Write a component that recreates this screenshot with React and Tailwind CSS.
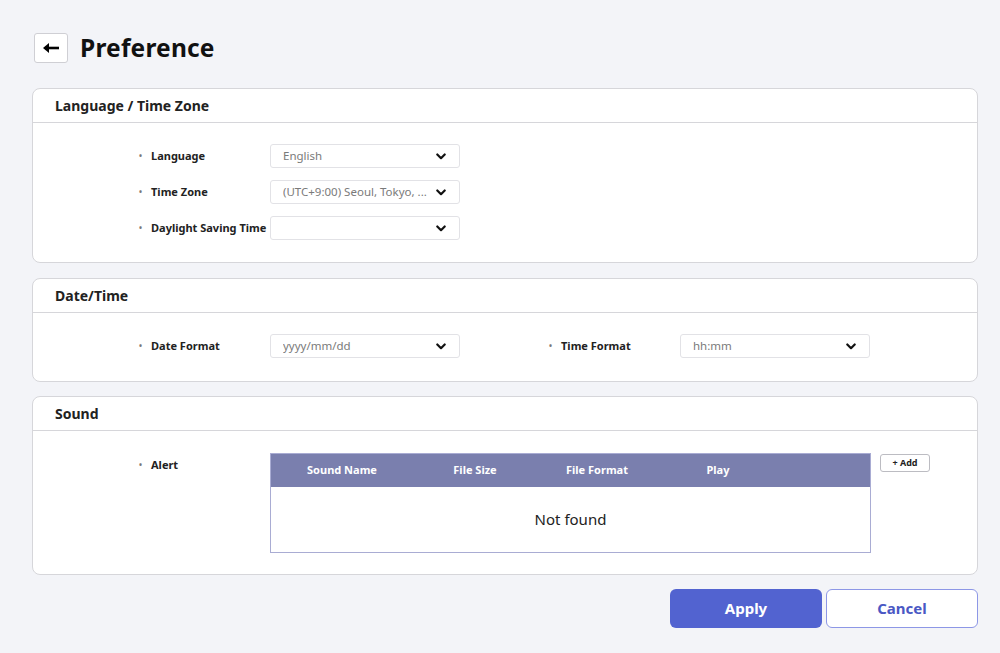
import React from "react";

function Chevron() {
  return (
    <svg width="10" height="7" viewBox="0 0 10 7" className="shrink-0">
      <path d="M1.3 1.5 L5 5.2 L8.7 1.5" fill="none" stroke="#111" strokeWidth="2.2" strokeLinecap="round" strokeLinejoin="round" />
    </svg>
  );
}

function Select({ value }) {
  return (
    <div className="w-[190px] h-6 border border-[#e2e2e6] rounded-[3px] bg-white flex items-center justify-between gap-2 pl-3 pr-[13px] text-[11.5px] text-[#7a7a7a]">
      <span className="whitespace-nowrap overflow-hidden">{value}</span>
      <Chevron />
    </div>
  );
}

function Field({ label, value }) {
  return (
    <div className="flex items-center h-6">
      <div className="w-[131px] flex items-center text-[11px] font-bold text-[#222] whitespace-nowrap">
        <span className="text-[#777] text-[8px] w-3">•</span>
        {label}
      </div>
      <Select value={value} />
    </div>
  );
}

function Card({ title, children, bodyClass, className = "" }) {
  return (
    <div className={`bg-white border border-[#d6d6da] rounded-lg ${className}`}>
      <div className="h-[34px] flex items-center px-[22px] border-b border-[#d6d6da] text-[14px] font-bold text-[#222]">
        {title}
      </div>
      <div className={bodyClass}>{children}</div>
    </div>
  );
}

export default function App() {
  const cols = [
    { name: "Sound Name", w: "w-[142px]" },
    { name: "File Size", w: "w-[124px]" },
    { name: "File Format", w: "w-[120px]" },
    { name: "Play", w: "w-[122px]" },
  ];

  return (
    <div className="min-h-screen bg-[#f3f4f8] pl-8 pr-[22px] pt-[33px] pb-6" style={{ fontFamily: '"Noto Sans", "Open Sans", sans-serif' }}>
      {/* Title */}
      <div className="flex items-center gap-3 ml-[2px] h-[30px]">
        <button className="w-[34px] h-[30px] bg-white border border-[#cfcfd4] rounded-[3px] flex items-center justify-center">
          <svg width="18" height="12" viewBox="0 0 18 12">
            <path d="M17 6 H3" stroke="#000" strokeWidth="2.6" />
            <path d="M1 6 L7 1 L7 11 Z" fill="#000" />
          </svg>
        </button>
        <h1 className="text-[24.5px] font-bold text-[#111] leading-none tracking-[0.2px]">Preference</h1>
      </div>

      <div className="mt-[25px] flex flex-col">
        <Card title="Language / Time Zone" bodyClass="pl-[106px] pt-[21px] pb-[22px] flex flex-col gap-3">
          <Field label="Language" value="English" />
          <Field label="Time Zone" value="(UTC+9:00) Seoul, Tokyo, ..." />
          <Field label="Daylight Saving Time" value="" />
        </Card>

        <Card className="mt-[15px]" title="Date/Time" bodyClass="pl-[106px] pt-[21px] pb-[23px] flex gap-[89px]">
          <Field label="Date Format" value="yyyy/mm/dd" />
          <Field label="Time Format" value="hh:mm" />
        </Card>

        <Card className="mt-[14px]" title="Sound" bodyClass="pl-[106px] pt-[22px] pb-[21px] flex items-start">
          <div className="w-[131px] flex items-center text-[11px] font-bold text-[#222] h-6">
            <span className="text-[#777] text-[8px] w-3">•</span>
            Alert
          </div>
          <div className="w-[601px] border border-[#a9acd3]">
            <div className="h-[33px] bg-[#7a7fae] flex items-center text-[11px] font-bold text-white">
              {cols.map((c) => (
                <div key={c.name} className={`${c.w} text-center`}>{c.name}</div>
              ))}
            </div>
            <div className="h-[65px] flex items-center justify-center text-[15px] text-[#222]">
              Not found
            </div>
          </div>
          <button className="ml-[9px] mt-[1px] w-[50px] h-[18px] border border-[#bcbcc2] rounded-[3px] bg-white text-[9px] font-bold text-[#222] flex items-center justify-center">
            + Add
          </button>
        </Card>
      </div>

      <div className="mt-[14px] flex justify-end gap-1">
        <button className="w-[152px] h-[39px] rounded-md bg-[#5263d0] text-white text-[15px] font-bold">Apply</button>
        <button className="w-[152px] h-[39px] rounded-md bg-white border border-[#8d97e6] text-[#4a58c4] text-[15px] font-bold">Cancel</button>
      </div>
    </div>
  );
}
